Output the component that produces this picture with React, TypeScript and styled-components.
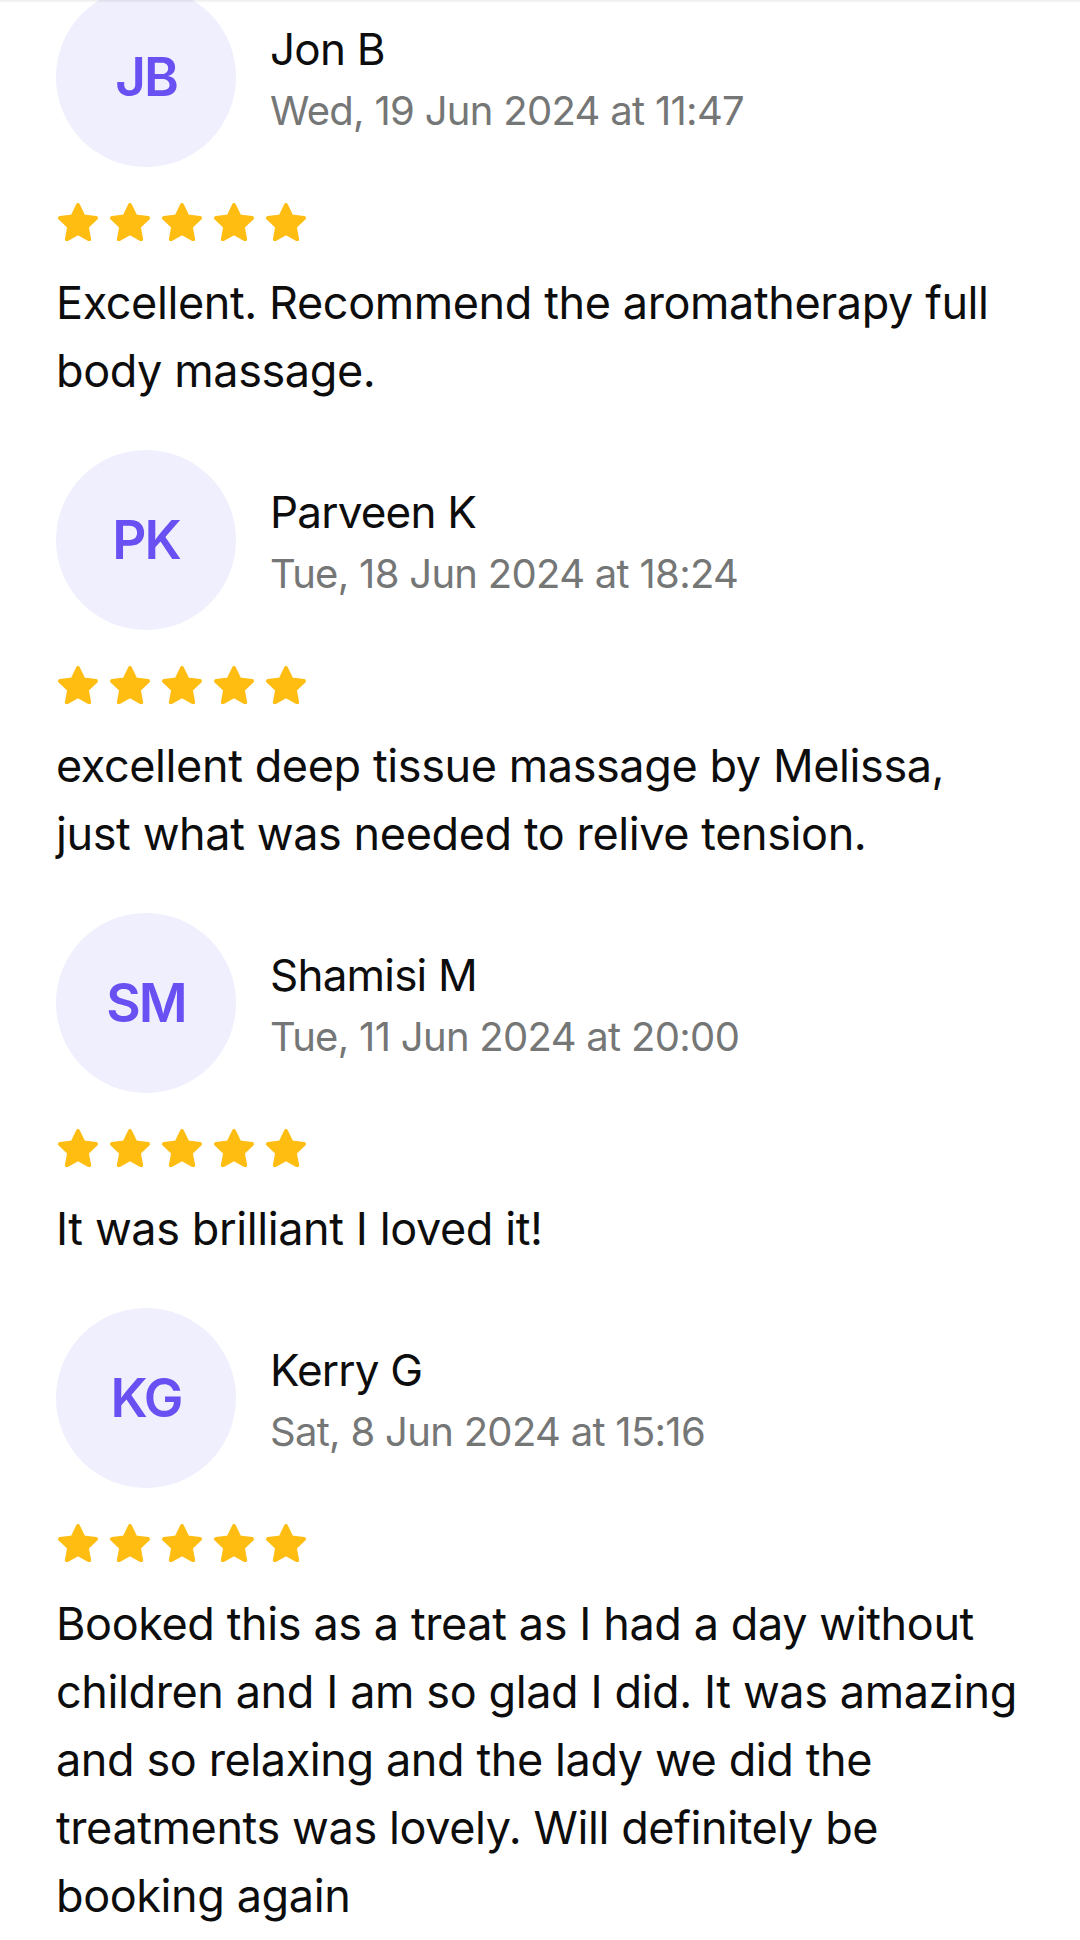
import React from "react";
import styled, { createGlobalStyle } from "styled-components";

const GlobalStyle = createGlobalStyle`
  html, body {
    margin: 0;
    padding: 0;
    background: #ffffff;
  }
  body {
    font-family: Inter, "Noto Sans", "Liberation Sans", sans-serif;
    color: #0d0d0d;
    -webkit-font-smoothing: antialiased;
  }
`;

const Page = styled.main`
  position: relative;
  width: 1080px;
  min-height: 1940px;
  overflow: hidden;
  background: #ffffff;
`;

const TopShade = styled.div`
  position: absolute;
  top: 0;
  left: 0;
  right: 0;
  height: 3px;
  background: linear-gradient(to bottom, rgba(0, 0, 0, 0.07), rgba(0, 0, 0, 0));
  z-index: 2;
`;

const List = styled.section`
  display: flex;
  flex-direction: column;
  padding: 0 56px;
  margin-top: -13px;
`;

const Review = styled.article`
  display: flex;
  flex-direction: column;
  padding-bottom: 45px;
`;

const Header = styled.header`
  display: flex;
  align-items: center;
  gap: 34px;
`;

const Avatar = styled.div`
  flex: 0 0 auto;
  width: 180px;
  height: 180px;
  border-radius: 50%;
  background: #efeffd;
  color: #6950f3;
  display: flex;
  align-items: center;
  justify-content: center;
  font-size: 53px;
  font-weight: 600;
  letter-spacing: -2px;
`;

const Meta = styled.div`
  display: flex;
  flex-direction: column;
  padding-top: 6px;
`;

const Name = styled.div`
  font-size: 44px;
  line-height: 52px;
  font-weight: 400;
  color: #0d0d0d;
  letter-spacing: -0.8px;
`;

const DateText = styled.div`
  margin-top: 10px;
  font-size: 40px;
  line-height: 52px;
  color: #757676;
  letter-spacing: -0.7px;
`;

const Stars = styled.div`
  display: flex;
  gap: 12px;
  margin-top: 36px;
  margin-left: 2px;
  height: 38px;
`;

const Body = styled.p`
  margin: 28px 0 0;
  font-size: 45px;
  line-height: 68px;
  color: #0d0d0d;
  letter-spacing: -0.4px;
`;

const Star: React.FC = () => (
  <svg width="40" height="38" viewBox="0 0 40 38" aria-hidden="true">
    <polygon
      points="20,2 25.41,13.46 37.97,15.06 28.75,23.74 31.11,36.19 20,30.1 8.89,36.19 11.25,23.74 2.03,15.06 14.59,13.46"
      fill="#ffbd12"
      stroke="#ffbd12"
      strokeWidth="4"
      strokeLinejoin="round"
    />
  </svg>
);

type ReviewData = {
  initials: string;
  name: string;
  date: string;
  rating: number;
  text: string;
};

const reviews: ReviewData[] = [
  {
    initials: "JB",
    name: "Jon B",
    date: "Wed, 19 Jun 2024 at 11:47",
    rating: 5,
    text: "Excellent. Recommend the aromatherapy full body massage.",
  },
  {
    initials: "PK",
    name: "Parveen K",
    date: "Tue, 18 Jun 2024 at 18:24",
    rating: 5,
    text: "excellent deep tissue massage by Melissa, just what was needed to relive tension.",
  },
  {
    initials: "SM",
    name: "Shamisi M",
    date: "Tue, 11 Jun 2024 at 20:00",
    rating: 5,
    text: "It was brilliant I loved it!",
  },
  {
    initials: "KG",
    name: "Kerry G",
    date: "Sat, 8 Jun 2024 at 15:16",
    rating: 5,
    text: "Booked this as a treat as I had a day without children and I am so glad I did. It was amazing and so relaxing and the lady we did the treatments was lovely. Will definitely be booking again",
  },
];

export default function App() {
  return (
    <>
      <GlobalStyle />
      <Page>
        <TopShade />
        <List>
          {reviews.map((r) => (
            <Review key={r.name}>
              <Header>
                <Avatar>{r.initials}</Avatar>
                <Meta>
                  <Name>{r.name}</Name>
                  <DateText>{r.date}</DateText>
                </Meta>
              </Header>
              <Stars>
                {Array.from({ length: r.rating }).map((_, i) => (
                  <Star key={i} />
                ))}
              </Stars>
              <Body>{r.text}</Body>
            </Review>
          ))}
        </List>
      </Page>
    </>
  );
}
